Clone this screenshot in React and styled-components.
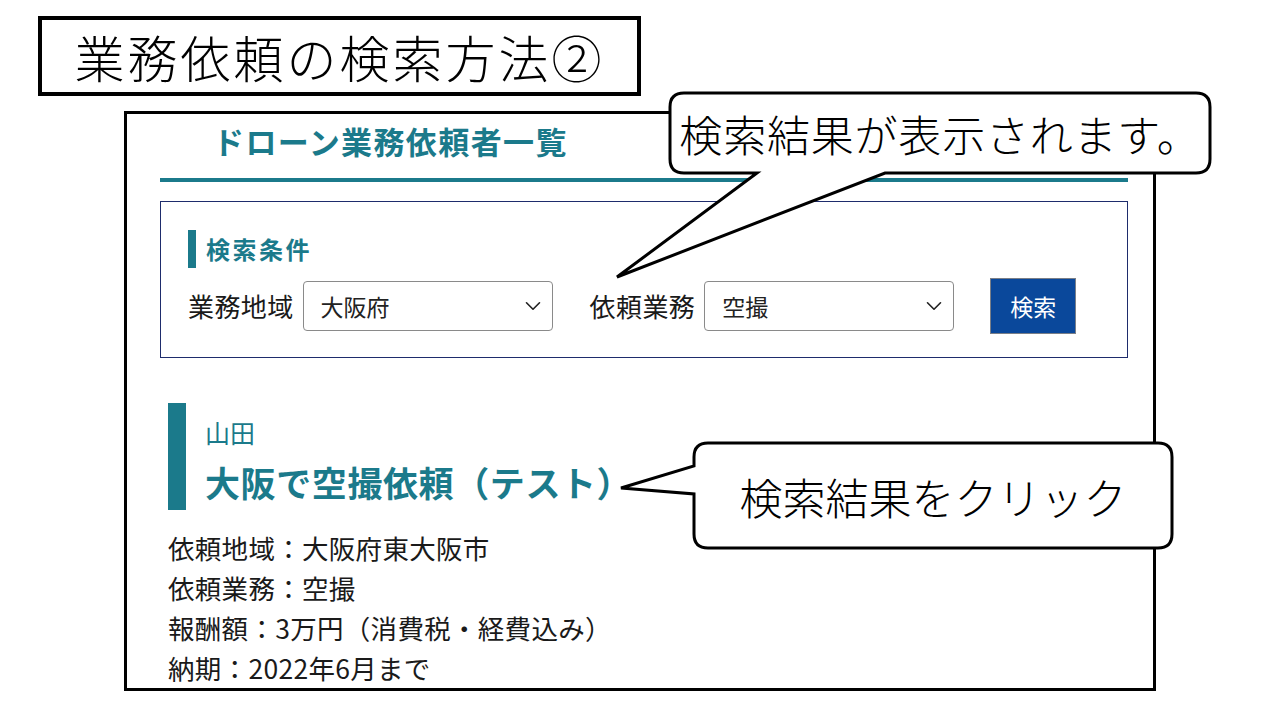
import React from "react";
import styled, { createGlobalStyle } from "styled-components";
import { ChevronDown } from "lucide-react";

const teal = "#1b7a8b";

const GlobalStyle = createGlobalStyle`
  html, body {
    margin: 0;
    padding: 0;
    background: #ffffff;
  }
  body {
    font-family: "Noto Sans CJK JP", "Noto Sans", sans-serif;
    color: #1a1a1a;
  }
`;

const Slide = styled.div`
  position: relative;
  width: 1280px;
  height: 720px;
  overflow: hidden;
  padding: 16px 0 0 38px;
  box-sizing: border-box;
  background: #fff;
`;

const TitleBox = styled.div`
  width: 603px;
  height: 80px;
  box-sizing: border-box;
  border: 4px solid #000;
  display: flex;
  align-items: center;
  justify-content: center;
  font-size: 50px;
  font-weight: 300;
  letter-spacing: 3px;
  color: #000;
`;

const Frame = styled.div`
  margin: 15px 0 0 86px;
  width: 1032px;
  height: 580px;
  box-sizing: border-box;
  border: 3px solid #000;
  overflow: hidden;
  display: flex;
  flex-direction: column;
`;

const PageHeading = styled.h1`
  margin: 8px 0 0 86px;
  font-size: 31px;
  line-height: 38px;
  font-weight: 700;
  color: ${teal};
  letter-spacing: 1.4px;
`;

const HeadingRule = styled.div`
  margin: 18px 0 0 33px;
  width: 968px;
  height: 4px;
  background: ${teal};
`;

const SearchBox = styled.div`
  margin: 19px 0 0 33px;
  width: 968px;
  height: 158px;
  box-sizing: border-box;
  border: 1px solid #1e2c6c;
  padding: 28px 0 0 27px;
`;

const SectionTitle = styled.div`
  display: flex;
  align-items: center;
  gap: 10px;
  height: 38px;
  font-size: 24px;
  font-weight: 700;
  color: ${teal};
  letter-spacing: 2.5px;

  &::before {
    content: "";
    width: 8px;
    height: 38px;
    background: ${teal};
  }
`;

const FieldRow = styled.div`
  display: flex;
  align-items: center;
  height: 56px;
  margin-top: 10px;
`;

const Label = styled.span`
  font-size: 26px;
  line-height: 1;
  margin-left: ${(p) => p.$offset || 0}px;
  letter-spacing: 0.4px;
`;

const Select = styled.div`
  margin-left: 9px;
  width: 250px;
  height: 50px;
  box-sizing: border-box;
  border: 1px solid #8a8a8a;
  border-radius: 4px;
  padding: 0 6px 0 17px;
  display: flex;
  align-items: center;
  justify-content: space-between;
  font-size: 23px;
  color: #222;
`;

const SearchButton = styled.button`
  margin-left: 36px;
  width: 86px;
  height: 56px;
  box-sizing: border-box;
  border: 1px solid #7a7f88;
  background: #0a489b;
  color: #fff;
  font-family: inherit;
  font-size: 23px;
  padding: 0;
`;

const Result = styled.div`
  display: flex;
  margin: 45px 0 0 41px;
  height: 107px;
`;

const ResultBar = styled.div`
  width: 18px;
  background: ${teal};
`;

const ResultText = styled.div`
  margin-left: 19px;
  padding-top: 10px;
  display: flex;
  flex-direction: column;
  gap: 8px;
  color: ${teal};
`;

const Requester = styled.div`
  font-size: 25px;
  line-height: 38px;
  font-weight: 400;
`;

const ResultTitle = styled.div`
  font-size: 35px;
  line-height: 46px;
  font-weight: 700;
  letter-spacing: 0.6px;
`;

const Details = styled.div`
  margin: 18px 0 0 41px;
  font-size: 26.5px;
  line-height: 40px;
  letter-spacing: 0.3px;
  color: #1a1a1a;
`;

const Callout = styled.div`
  position: absolute;
  left: ${(p) => p.$x}px;
  top: ${(p) => p.$y}px;
  width: ${(p) => p.$w}px;
  height: ${(p) => p.$h}px;
`;

const CalloutShape = styled.svg`
  position: absolute;
  left: 0;
  top: 0;
`;

const CalloutText = styled.div`
  position: absolute;
  left: ${(p) => p.$x}px;
  top: ${(p) => p.$y}px;
  width: ${(p) => p.$w}px;
  height: ${(p) => p.$h}px;
  display: flex;
  align-items: center;
  justify-content: center;
  font-size: 43px;
  font-weight: 300;
  letter-spacing: ${(p) => p.$track || 0}px;
  color: #000;
  white-space: nowrap;
`;

const details = [
  "依頼地域：大阪府東大阪市",
  "依頼業務：空撮",
  "報酬額：3万円（消費税・経費込み）",
  "納期：2022年6月まで",
];

const App = () => {
  return (
    <>
      <GlobalStyle />
      <Slide>
        <TitleBox>業務依頼の検索方法②</TitleBox>

        <Frame>
          <PageHeading>ドローン業務依頼者一覧</PageHeading>
          <HeadingRule />
          <SearchBox>
            <SectionTitle>検索条件</SectionTitle>
            <FieldRow>
              <Label>業務地域</Label>
              <Select>
                大阪府
                <ChevronDown size={26} strokeWidth={1.5} color="#222" />
              </Select>
              <Label $offset={37}>依頼業務</Label>
              <Select>
                空撮
                <ChevronDown size={26} strokeWidth={1.5} color="#222" />
              </Select>
              <SearchButton>検索</SearchButton>
            </FieldRow>
          </SearchBox>

          <Result>
            <ResultBar />
            <ResultText>
              <Requester>山田</Requester>
              <ResultTitle>大阪で空撮依頼（テスト）</ResultTitle>
            </ResultText>
          </Result>

          <Details>
            {details.map((d) => (
              <div key={d}>{d}</div>
            ))}
          </Details>
        </Frame>

        <Callout $x={600} $y={85} $w={620} $h={200}>
          <CalloutShape width="620" height="200" viewBox="0 0 620 200">
            <path
              d="M 84 8 H 596 Q 610 8 610 22 V 74 Q 610 88 596 88 H 285 L 17 192 L 157 88 H 84 Q 70 88 70 74 V 22 Q 70 8 84 8 Z"
              fill="#fff"
              stroke="#000"
              strokeWidth="3"
              strokeLinejoin="miter"
            />
          </CalloutShape>
          <CalloutText $x={70} $y={8} $w={540} $h={80} $track={0.8}>
            検索結果が表示されます。
          </CalloutText>
        </Callout>

        <Callout $x={600} $y={430} $w={590} $h={130}>
          <CalloutShape width="590" height="130" viewBox="0 0 590 130">
            <path
              d="M 108 13 H 558 Q 572 13 572 27 V 104 Q 572 118 558 118 H 108 Q 94 118 94 104 V 64 L 21 58 L 94 36 V 27 Q 94 13 108 13 Z"
              fill="#fff"
              stroke="#000"
              strokeWidth="3"
              strokeLinejoin="miter"
            />
          </CalloutShape>
          <CalloutText $x={94} $y={13} $w={478} $h={105}>
            検索結果をクリック
          </CalloutText>
        </Callout>
      </Slide>
    </>
  );
};

export default App;
